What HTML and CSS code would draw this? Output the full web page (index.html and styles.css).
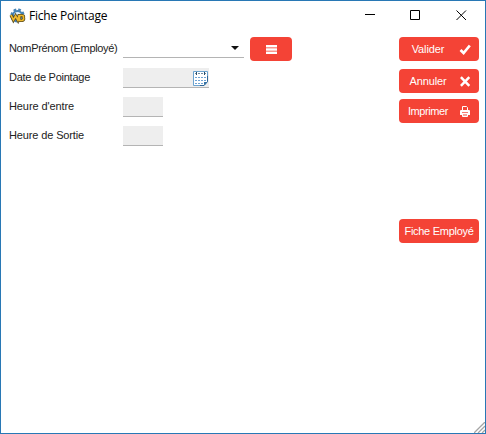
FILE: index.html
```html
<!DOCTYPE html>
<html lang="fr">
<head>
<meta charset="utf-8">
<title>Fiche Pointage</title>
<link rel="stylesheet" href="styles.css">
</head>
<body>
<div class="window">
  <header class="titlebar">
    <svg class="app-icon" width="17" height="16" viewBox="0 0 17 16">
      <circle cx="8.5" cy="7.5" r="5.6" fill="none" stroke="#4683b5" stroke-width="3" stroke-dasharray="2.5 1.9"/>
      <circle cx="8.5" cy="7.5" r="4.5" fill="#e6f3fb" stroke="#4683b5" stroke-width="2"/>
      <path d="M2 7l2.400 5 2.200-4 2.200 4L10 7.500h3.200q1.800.2 1.200 2 .9 2.400-1.400 3H10.500V8" fill="none" stroke="#57491b" stroke-width="3.200"/>
      <path d="M2 7l2.400 5 2.200-4 2.200 4L10 7.500h3.200q1.800.2 1.200 2 .9 2.400-1.400 3H10.500V8" fill="none" stroke="#edb92f" stroke-width="1.700"/>
    </svg>
    <h1 class="title">Fiche Pointage</h1>
    <div class="controls">
      <svg width="10" height="11" viewBox="0 0 10 11"><path d="M0 4.500h10"/></svg>
      <svg width="11" height="11" viewBox="0 0 11 11"><path d="M.5.5h9v9h-9z"/></svg>
      <svg width="11" height="11" viewBox="0 0 11 11"><path d="M.5.500l9.500 9.500M10 .500L.5 10"/></svg>
    </div>
  </header>
  <main class="content">
    <form class="form">
      <div class="row">
        <label class="label label-employee">NomPrénom (Employé)</label>
        <div class="field combo"><svg width="8" height="4" viewBox="0 0 8 4"><path d="M0 0h8L4 4z" fill="#111"/></svg></div>
        <button type="button" class="button list-button" aria-label="Liste">
          <svg width="11" height="9" viewBox="0 0 11 9"><path d="M0 0h11v9H0z" fill="#fa968e"/><path d="M0 1h11M0 4.500h11M0 8h11" stroke="#fff" stroke-width="2"/></svg>
        </button>
      </div>
      <div class="row">
        <label class="label label-date">Date de Pointage</label>
        <div class="field date">
          <svg width="15" height="16" viewBox="0 0 15 16">
            <path d="M.5 1.500h14v10l-3.500 4H.5z" fill="#fff" stroke="#6ba3d0"/>
            <path d="M14.500 6v5.500l-3.500 4H7" fill="none" stroke="#2e6596"/>
            <path d="M2 3.500h11" stroke="#6f8ba0" stroke-dasharray="2 1"/>
            <path d="M3.500 2v3M11.500 2v3" stroke="#294e6b"/>
            <path d="M2 7h2v1H2zM5 7h2v1H5zM8 7h2v1H8zM11 7h2v1h-2zM2 10h2v1H2zM5 10h2v1H5zM8 10h2v1H8zM11 10h2v1h-2zM2 13h2v1H2zM5 13h2v1H5zM8 13h2v1H8z" fill="#6fa3d4"/>
            <path d="M11 15v-3h3.500z" fill="#3874a5"/>
          </svg>
        </div>
      </div>
      <div class="row">
        <label class="label label-in">Heure d'entre</label>
        <div class="field time"></div>
      </div>
      <div class="row">
        <label class="label label-out">Heure de Sortie</label>
        <div class="field time"></div>
      </div>
    </form>
    <aside class="actions">
      <button type="button" class="button action validate"><span>Valider</span>
        <svg width="12" height="11" viewBox="0 0 12 11"><path d="M1.500 6l3.100 3L10.800 1.500" fill="none" stroke="#fff" stroke-width="2.700"/></svg>
      </button>
      <button type="button" class="button action cancel"><span>Annuler</span>
        <svg width="12" height="11" viewBox="0 0 12 11"><path d="M1.900 1.200l8.400 8.600M10.300 1.200L1.900 9.800" stroke="#fff" stroke-width="2.500"/></svg>
      </button>
      <button type="button" class="button action print"><span>Imprimer</span>
        <svg width="12" height="11" viewBox="0 0 12 11"><path d="M3.500 4V.5h4l1 1V4" fill="#f44336" stroke="#fff"/><path d="M2 4h8q1 0 1 1v4H1V5q0-1 1-1z" fill="#fff"/><path d="M3.500 7.500h5v3h-5z" fill="#f9a49d" stroke="#fff"/><path d="M3 6.500h6" stroke="#f77b72"/></svg>
      </button>
      <button type="button" class="button employee"><span>Fiche Employé</span></button>
    </aside>
  </main>
  <svg class="grip" width="11" height="11" viewBox="0 0 11 11"><path d="M0 11L11 0M4 11l7-7M8 11l3-3" stroke="#a5a5a5" stroke-width="1.300"/></svg>
</div>
</body>
</html>
```
FILE: styles.css
```css
* { box-sizing: border-box; }
body { margin: 0; background: #fff; }
svg { display: block; flex: none; }

.window {
  position: relative;
  width: 486px;
  height: 434px;
  border: 1px solid #2878b5;
  background: #fff;
  font: 11px/14px "Liberation Sans", Arial, sans-serif;
  color: #222;
}

.titlebar {
  display: flex;
  align-items: center;
  height: 29px;
  padding: 0 18px 0 8px;
}
.title {
  margin: 1px 0 0 3px;
  font: 400 12px/16px "Open Sans", "Noto Sans", sans-serif;
  letter-spacing: -0.2px;
  color: #000;
}
.controls { display: flex; gap: 35px; margin-left: auto; }
.controls svg { fill: none; stroke: #000; }

.content {
  display: flex;
  justify-content: space-between;
  padding: 7px 6px 0 8px;
}
.row { display: flex; align-items: flex-start; height: 29px; }
.label { width: 114px; margin-top: 4px; white-space: nowrap; }
.label-employee { letter-spacing: -0.35px; }
.label-date { letter-spacing: -0.25px; }
.label-in { letter-spacing: -0.1px; }
.label-out { letter-spacing: -0.13px; }

.field {
  display: flex;
  align-items: center;
  justify-content: flex-end;
  height: 20px;
  margin-top: 2px;
  background: #eee;
  border-bottom: 1px solid #b4b4b4;
}
.combo { width: 121px; height: 19px; padding-right: 5px; background: #fff; }
.date { width: 86px; padding-right: 1px; }
.time { width: 40px; }

.button {
  display: flex;
  align-items: center;
  justify-content: center;
  height: 24px;
  padding: 0;
  border: 0;
  border-radius: 4px;
  background: #f44336;
  color: #fff;
  font: inherit;
  white-space: nowrap;
}
.list-button { width: 42px; margin-left: 6px; }

.actions { display: flex; flex-direction: column; width: 80px; }
.action { justify-content: flex-start; padding-right: 8px; }
.action span { flex: 1; padding-right: 2px; text-align: center; }
.validate span, .cancel span { letter-spacing: -0.1px; }
.cancel { margin-top: 8px; }
.print { margin-top: 6px; }
.print span { letter-spacing: -0.4px; }
.employee { margin-top: 96px; letter-spacing: -0.28px; }

.grip { position: absolute; right: 0; bottom: 0; }
```
